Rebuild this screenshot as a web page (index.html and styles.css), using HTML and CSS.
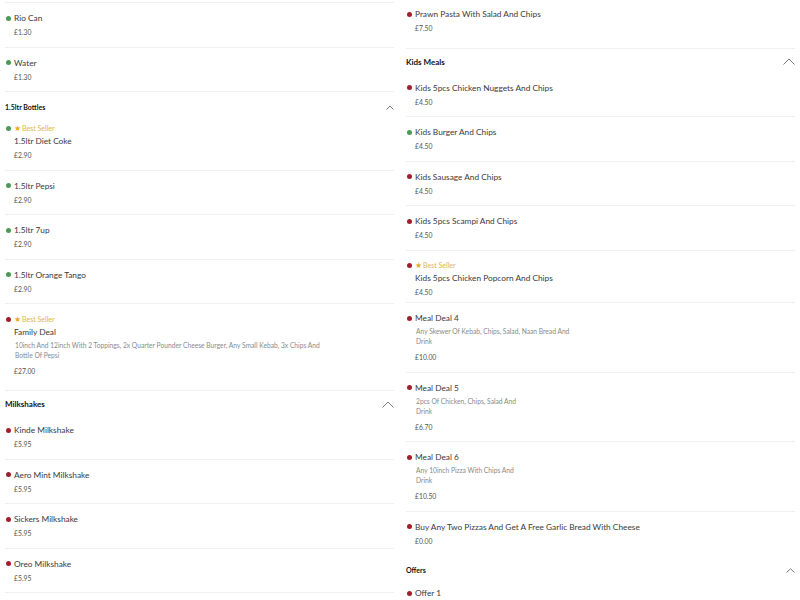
FILE: index.html
```html
<!DOCTYPE html>
<html lang="en">
<head>
  <meta charset="UTF-8">
  <meta name="viewport" content="width=device-width, initial-scale=1.0">
  <title>Menu</title>
  <link rel="stylesheet" href="styles.css">
</head>
<body>
  <div class="menu">
    <!-- left column -->
    <div class="col">
      <div class="rule"></div>
      <div class="item">
        <div class="name"><span class="dot veg"></span>Rio Can</div>
        <div class="price">£1.30</div>
      </div>
      <div class="item">
        <div class="name"><span class="dot veg"></span>Water</div>
        <div class="price">£1.30</div>
      </div>

      <div class="section section-small">
        <div class="section-head">
          <span>1.5ltr Bottles</span>
          <svg class="chev" width="8" height="5" viewBox="0 0 8 5"><path d="M0.5 4.5 L4 1 L7.5 4.5" /></svg>
        </div>
        <div class="item">
          <div class="badge"><span class="dot veg"></span><span class="star">★</span>Best Seller</div>
          <div class="name">1.5ltr Diet Coke</div>
          <div class="price">£2.90</div>
        </div>
        <div class="item">
          <div class="name"><span class="dot veg"></span>1.5ltr Pepsi</div>
          <div class="price">£2.90</div>
        </div>
        <div class="item">
          <div class="name"><span class="dot veg"></span>1.5ltr 7up</div>
          <div class="price">£2.90</div>
        </div>
        <div class="item">
          <div class="name"><span class="dot veg"></span>1.5ltr Orange Tango</div>
          <div class="price">£2.90</div>
        </div>
        <div class="item item-spaced">
          <div class="badge"><span class="dot"></span><span class="star">★</span>Best Seller</div>
          <div class="name">Family Deal</div>
          <div class="desc">10inch And 12inch With 2 Toppings, 2x Quarter Pounder Cheese Burger, Any Small Kebab, 3x Chips And<br>Bottle Of Pepsi</div>
          <div class="price">£27.00</div>
        </div>
      </div>

      <div class="section section-big">
        <div class="section-head">
          <span>Milkshakes</span>
          <svg class="chev" width="12" height="7" viewBox="0 0 12 7"><path d="M0.5 6.5 L6 1 L11.5 6.5" /></svg>
        </div>
        <div class="item">
          <div class="name"><span class="dot"></span>Kinde Milkshake</div>
          <div class="price">£5.95</div>
        </div>
        <div class="item">
          <div class="name"><span class="dot"></span>Aero Mint Milkshake</div>
          <div class="price">£5.95</div>
        </div>
        <div class="item">
          <div class="name"><span class="dot"></span>Sickers Milkshake</div>
          <div class="price">£5.95</div>
        </div>
        <div class="item item-ruled">
          <div class="name"><span class="dot"></span>Oreo Milkshake</div>
          <div class="price">£5.95</div>
        </div>
      </div>
    </div>

    <!-- right column -->
    <div class="col">
      <div class="item item-first">
        <div class="name"><span class="dot"></span>Prawn Pasta With Salad And Chips</div>
        <div class="price">£7.50</div>
      </div>

      <div class="section section-big">
        <div class="section-head">
          <span>Kids Meals</span>
          <svg class="chev" width="12" height="7" viewBox="0 0 12 7"><path d="M0.5 6.5 L6 1 L11.5 6.5" /></svg>
        </div>
        <div class="item">
          <div class="name"><span class="dot"></span>Kids 5pcs Chicken Nuggets And Chips</div>
          <div class="price">£4.50</div>
        </div>
        <div class="item">
          <div class="name"><span class="dot veg"></span>Kids Burger And Chips</div>
          <div class="price">£4.50</div>
        </div>
        <div class="item">
          <div class="name"><span class="dot"></span>Kids Sausage And Chips</div>
          <div class="price">£4.50</div>
        </div>
        <div class="item">
          <div class="name"><span class="dot"></span>Kids 5pcs Scampi And Chips</div>
          <div class="price">£4.50</div>
        </div>
        <div class="item item-short">
          <div class="badge"><span class="dot"></span><span class="star">★</span>Best Seller</div>
          <div class="name">Kids 5pcs Chicken Popcorn And Chips</div>
          <div class="price">£4.50</div>
        </div>
        <div class="item">
          <div class="name"><span class="dot"></span>Meal Deal 4</div>
          <div class="desc">Any Skewer Of Kebab, Chips, Salad, Naan Bread And<br>Drink</div>
          <div class="price">£10.00</div>
        </div>
        <div class="item">
          <div class="name"><span class="dot"></span>Meal Deal 5</div>
          <div class="desc">2pcs Of Chicken, Chips, Salad And<br>Drink</div>
          <div class="price">£6.70</div>
        </div>
        <div class="item">
          <div class="name"><span class="dot"></span>Meal Deal 6</div>
          <div class="desc">Any 10inch Pizza With Chips And<br>Drink</div>
          <div class="price">£10.50</div>
        </div>
        <div class="item">
          <div class="name"><span class="dot"></span>Buy Any Two Pizzas And Get A Free Garlic Bread With Cheese</div>
          <div class="price">£0.00</div>
        </div>
      </div>

      <div class="section section-small">
        <div class="section-head">
          <span>Offers</span>
          <svg class="chev" width="9" height="5" viewBox="0 0 9 5"><path d="M0.5 4.5 L4.5 0.8 L8.5 4.5" /></svg>
        </div>
        <div class="item item-offer">
          <div class="name"><span class="dot"></span>Offer 1</div>
        </div>
      </div>
    </div>
  </div>
</body>
</html>
```

FILE: styles.css
```css
body {
  margin: 0;
  background: #fff;
  font-family: Lato, "Open Sans", Arial, sans-serif;
  color: #333;
  overflow: hidden;
}
.menu {
  display: grid;
  grid-template-columns: 1fr 1fr;
  gap: 12px;
  padding: 0 5px;
}
.col {
  display: flex;
  flex-direction: column;
}
.rule {
  margin-top: 2px;
  height: 1px;
  background: #efefef;
}
.item {
  padding: 9px 0 9.5px 9px;
  border-bottom: 1px solid #efefef;
}
.section .item:last-child {
  border-bottom: none;
}
.section .item.item-ruled {
  border-bottom: 1px solid #efefef;
}
.item-first {
  padding-top: 8px;
  border-bottom: none;
}
.item-short {
  padding-bottom: 5.5px;
}
.item-spaced {
  padding-top: 9.5px;
}
.item-offer {
  padding-top: 10px;
}
.name {
  position: relative;
  font-size: 8.3px;
  line-height: 12px;
  color: #3a3a3a;
}
.price {
  margin-top: 3px;
  font-size: 6.8px;
  line-height: 10px;
  color: #555;
}
.desc {
  margin-top: 2px;
  padding-left: 1px;
  font-size: 6.7px;
  line-height: 10px;
  color: #8a8a8a;
}
.badge + .name {
  margin-top: 1px;
}
.desc + .price {
  margin-top: 6px;
}
.badge {
  position: relative;
  font-size: 7px;
  line-height: 10px;
  color: #e0b54a;
}
.star {
  margin-right: 1px;
  font-size: 7.5px;
  color: #e3ad2a;
}
.dot {
  position: absolute;
  left: -8px;
  top: 50%;
  width: 5px;
  height: 5px;
  margin-top: -2.5px;
  border-radius: 50%;
  background: #a11f2c;
}
.dot.veg {
  background: #4c9a55;
}
.section-small {
  margin-top: 8px;
}
.section-big {
  margin-top: 5px;
  border-top: 1px solid #efefef;
}
.section-head {
  display: flex;
  justify-content: space-between;
  align-items: center;
  font-weight: bold;
  color: #111;
}
.section-small .section-head {
  font-size: 7px;
  line-height: 14px;
}
.section-big .section-head {
  padding: 6px 0 4px;
  font-size: 8px;
  line-height: 14px;
}
.chev {
  fill: none;
  stroke: #777;
  stroke-width: 1;
}
```
